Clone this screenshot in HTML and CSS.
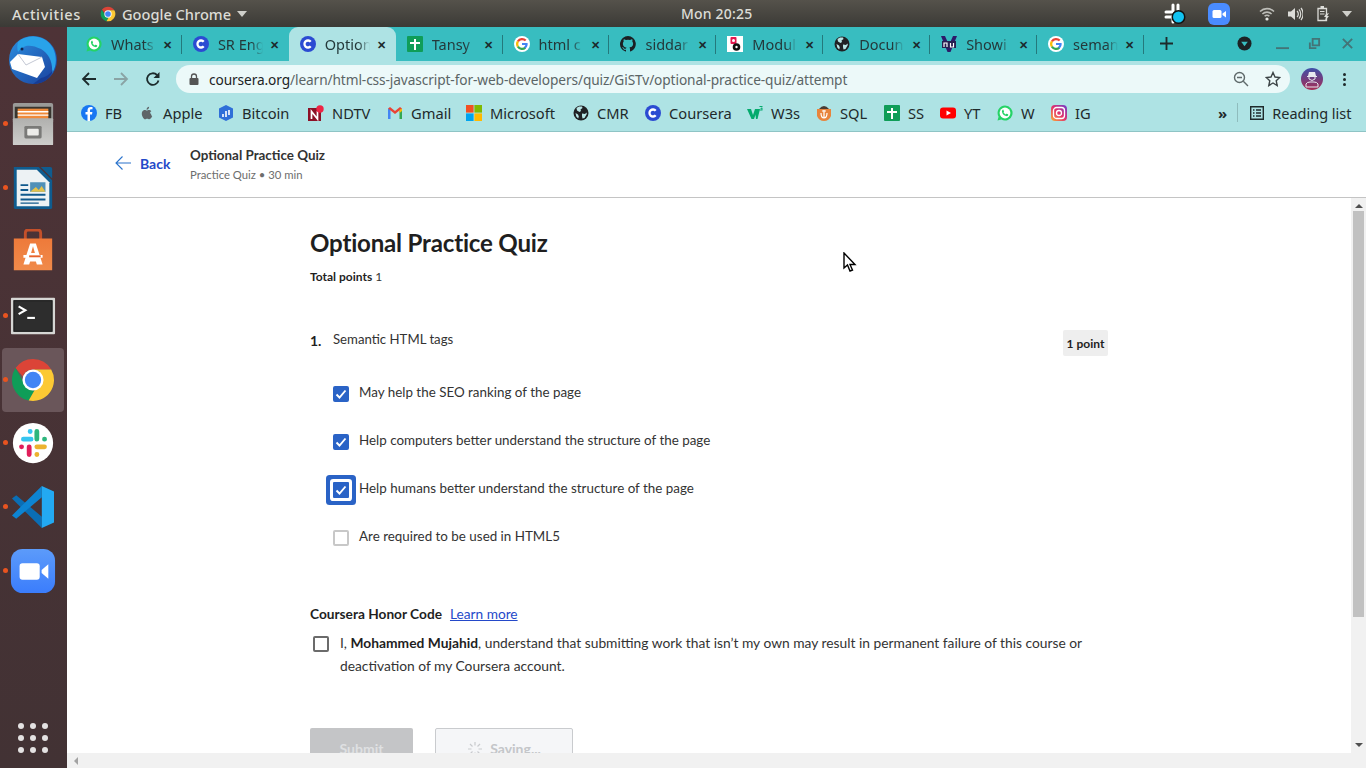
FILE: index.html
```html
<!DOCTYPE html>
<html lang="en">
<head>
<meta charset="utf-8">
<title>Optional Practice Quiz</title>
<link rel="stylesheet" href="styles.css">
</head>
<body>
<svg class="defs" width="0" height="0" aria-hidden="true">
  <symbol id="i-chrome" viewBox="0 0 48 48">
    <path fill="#db4437" d="M24 2a22 22 0 0 1 19 11H24a11 11 0 0 0-10.500 7.500L5.800 11.600A22 22 0 0 1 24 2z"/>
    <path fill="#0f9d58" d="M5.800 11.600 15 28a11 11 0 0 0 11 6.800L19.500 45.500A22 22 0 0 1 5.800 11.600z"/>
    <path fill="#fcc934" d="M43 13a22 22 0 0 1-23.500 32.500L29.500 28A11 11 0 0 0 31 15.500L24 13z"/>
    <circle cx="24" cy="24" r="11" fill="#fff"/><circle cx="24" cy="24" r="8.500" fill="#4285f4"/>
  </symbol>
  <symbol id="i-wa" viewBox="0 0 16 16">
    <path fill="#25d366" d="M8 .5a7.500 7.500 0 0 0-6.400 11.300L.5 15.500l3.800-1A7.500 7.500 0 1 0 8 .5z"/>
    <circle cx="8" cy="8" r="5.400" fill="#fff"/>
    <path fill="#25d366" d="M5.800 4.700c-.7.500-1 1.300-.8 2.200.5 2 2.100 3.700 4.100 4.200.9.200 1.700-.1 2.100-.8.200-.4.100-.8-.2-1l-1.200-.6c-.3-.1-.5 0-.7.200l-.4.500c-1-.4-1.700-1.100-2.200-2.100l.4-.5c.2-.2.200-.4.100-.6l-.6-1.300c-.2-.3-.4-.4-.6-.2z"/>
  </symbol>
  <symbol id="i-c" viewBox="0 0 16 16">
    <circle cx="8" cy="8" r="8" fill="#2b4bd2"/>
    <path fill="none" stroke="#fff" stroke-width="2.300" d="M10.700 5.800a3.500 3.500 0 1 0 0 4.400"/>
  </symbol>
  <symbol id="i-sheet" viewBox="0 0 16 16">
    <rect width="16" height="16" rx="1" fill="#0f9d58"/>
    <path fill="#fff" d="M7 3h2v3h4v2H9v6H7V8H3V6h4z"/>
  </symbol>
  <symbol id="i-g" viewBox="0 0 16 16">
    <circle cx="8" cy="8" r="8" fill="#fff"/>
    <path fill="none" stroke="#ea4335" stroke-width="2.200" d="M11.700 4.600A5 5 0 0 0 3.900 5.400"/>
    <path fill="none" stroke="#fbbc05" stroke-width="2.200" d="M3.900 5.400a5 5 0 0 0 0 5.200"/>
    <path fill="none" stroke="#34a853" stroke-width="2.200" d="M3.900 10.600a5 5 0 0 0 7.500 1.100"/>
    <path fill="#4285f4" d="M8 7h5.600c.3 2-.3 4-2 5.500L10 11c.8-.5 1.200-1.200 1.400-2H8z"/>
  </symbol>
  <symbol id="i-gh" viewBox="0 0 16 16">
    <path fill="#1b1f23" d="M8 0a8 8 0 0 0-2.500 15.600c.4.100.5-.2.500-.4v-1.400c-2.200.5-2.700-1-2.700-1-.4-.9-.9-1.200-.9-1.200-.7-.5.100-.5.100-.5.800.1 1.200.8 1.200.8.700 1.200 1.900.9 2.300.7.100-.5.300-.9.500-1.100-1.800-.2-3.600-.9-3.600-4 0-.9.300-1.600.8-2.100-.1-.2-.4-1 .1-2.100 0 0 .7-.2 2.200.8a7.600 7.600 0 0 1 4 0c1.500-1 2.200-.8 2.200-.8.500 1.100.2 1.900.1 2.100.5.600.8 1.300.8 2.100 0 3.100-1.900 3.700-3.700 3.900.3.300.6.800.6 1.500v2.200c0 .2.100.5.600.4A8 8 0 0 0 8 0z"/>
  </symbol>
  <symbol id="i-modul" viewBox="0 0 16 16">
    <rect width="16" height="16" fill="#fff"/>
    <rect x="3.500" y="1" width="6" height="7" rx="1" fill="#e3174f"/>
    <circle cx="6.500" cy="4.500" r="1.500" fill="#fff"/>
    <circle cx="9.500" cy="11" r="3.800" fill="#111"/>
    <circle cx="9.500" cy="11" r="1.200" fill="#fff"/>
  </symbol>
  <symbol id="i-globe" viewBox="0 0 16 16">
    <circle cx="8" cy="8" r="7.500" fill="#202124"/>
    <path fill="#b9e6e6" d="M6 1.500 3.500 3 4 5.500l2.500 1.500L8 6 7.500 4.500 9.500 3 9 1.600zM9 8.500l3 .5 1.500-1.500.3 1.500L11.500 13 9.500 13.500 9 11zM2.500 8l2.500 1.500.8 2-.6 2L3.300 11.500z"/>
  </symbol>
  <symbol id="i-show" viewBox="0 0 16 16">
    <path fill="#2d1b69" d="M0 0h4l4 9 4-9h4L9.500 16h-3z"/>
    <rect x="1" y="5" width="14" height="7" fill="#26204f"/>
    <path fill="none" stroke="#fff" stroke-width="1.200" d="M3 11V7h3v4M9.500 7v4h3V7"/>
  </symbol>
</svg>

<div class="screen">
  <header class="topbar">
    <div class="top-left">
      <span class="activities">Activities</span>
      <span class="appname">
        <svg class="ic16" aria-hidden="true"><use href="#i-chrome"/></svg>
        Google Chrome
        <i class="caret"></i>
      </span>
    </div>
    <span class="clock">Mon 20:25</span>
    <div class="tray">
      <svg class="tray-slack" viewBox="0 0 24 24" aria-hidden="true">
        <g fill="none" stroke="#fff" stroke-width="3" stroke-linecap="round">
          <path d="M10 3v6M3 10h6M15 3v6M3 15h6M10 15v5"/>
        </g>
        <circle cx="15.500" cy="15" r="7" fill="#111"/><circle cx="15.500" cy="15" r="5.500" fill="#12c2f0"/>
      </svg>
      <svg class="tray-zoom" viewBox="0 0 22 22" aria-hidden="true">
        <rect width="22" height="22" rx="6" fill="#4a8cff"/>
        <rect x="4.500" y="7" width="9" height="8" rx="1.500" fill="#fff"/>
        <path fill="#fff" d="M14.500 10.500 18 8v6.500l-3.500-2.500z"/>
      </svg>
      <svg class="tray-wifi" viewBox="0 0 16 16" aria-hidden="true">
        <path fill="none" stroke="#bdbdb8" stroke-width="1.600" d="M1 5.500a10 10 0 0 1 14 0M3.400 8a6.600 6.600 0 0 1 9.200 0M5.600 10.300a3.400 3.400 0 0 1 4.800 0"/>
        <circle cx="8" cy="13" r="1.600" fill="#e6e6e2"/>
      </svg>
      <svg class="tray-vol" viewBox="0 0 16 16" aria-hidden="true">
        <path fill="#dcdcd8" d="M1 5.500h3L8 2v12L4 10.500H1z"/>
        <path fill="none" stroke="#dcdcd8" stroke-width="1.200" d="M10 5a4 4 0 0 1 0 6M12 3.400a7 7 0 0 1 0 9.200M14 2a9.500 9.500 0 0 1 0 12"/>
      </svg>
      <svg class="tray-bat" viewBox="0 0 12 16" aria-hidden="true">
        <path fill="none" stroke="#dcdcd8" stroke-width="1.300" d="M1 2.500h8.500v12H1z"/>
        <path fill="#dcdcd8" d="M3.500 0h3.500v2H3.500zM3 5h4.500v1H3zM3 7.500h4.500v1H3zM9 8l3-1-2 3h2l-4 5 1-4H7z"/>
      </svg>
      <i class="caret tray-caret"></i>
    </div>
  </header>

  <div class="desktop">
    <nav class="dock">
      <div class="dock-item">
        <svg class="dock-ic big" viewBox="0 0 48 48" aria-hidden="true">
          <defs><linearGradient id="tb" x1="0" x2="1" y1="0" y2="1"><stop offset="0" stop-color="#2b8fe0"/><stop offset="1" stop-color="#1a3f9c"/></linearGradient></defs>
          <circle cx="24" cy="24" r="24" fill="url(#tb)"/>
          <path fill="#29a3ea" d="M9 6C18-2 36-2 44 12c4 8 4 18-1 25 1-11-3-19-11-24-6-3-11-4-15-3-3 1-6 3-8 6-1-3-1-7 0-10z"/>
          <path fill="#173c94" d="M24 48c10 0 17-5 20-14-3 4-7 7-12 8z"/>
          <circle cx="13" cy="13" r="1.500" fill="#12224e"/>
          <path fill="#fff" d="M9 18l24 3 3 10-8 11L3 33 1 26z"/>
          <path fill="none" stroke="#c4c8d4" stroke-width="1" d="M9 18l8 11 16-8"/>
        </svg>
      </div>
      <div class="dock-item running">
        <svg class="dock-ic" viewBox="0 0 48 48" aria-hidden="true">
          <defs><linearGradient id="fg" x1="0" x2="0" y1="0" y2="1"><stop offset="0" stop-color="#b0b0ae"/><stop offset="1" stop-color="#cdcdcb"/></linearGradient></defs>
          <path fill="#9a9a98" d="M3 4q0-2 2-2h38q2 0 2 2v18H3z"/>
          <rect x="5" y="6" width="38" height="14" fill="#38352f"/>
          <rect x="8" y="8" width="32" height="12" fill="#ef8a3a"/>
          <path fill="#fff" d="M8 10.500h32v1.500H8zM8 14h32v1.500H8z"/>
          <rect x="3" y="18" width="42" height="28" rx="1" fill="url(#fg)"/>
          <rect x="15" y="26" width="18" height="13" rx="1.500" fill="#7a7a78"/>
          <rect x="18" y="29" width="12" height="7" rx="1" fill="#ecece9"/>
        </svg>
      </div>
      <div class="dock-item running">
        <svg class="dock-ic" viewBox="0 0 48 48" aria-hidden="true">
          <path fill="#0f5c8f" d="M4 2h26l14 14v28q0 2-2 2H6q-2 0-2-2z"/>
          <path fill="#0f5c8f" d="M32 2h10q2 0 2 2v10z"/>
          <path fill="#edf2f4" d="M7 5h21l13 13v25H7z"/>
          <path fill="#10598c" d="M11 20h8v2h-8zM11 25h8v2h-8zM11 30h26v2H11zM11 35h26v2H11zM11 39h19v1.500H11z"/>
          <rect x="21" y="18" width="16" height="10" fill="#4f90b8"/>
          <path fill="#e3c14a" d="M21 28l6-5 3 3 3-4 4 6z"/>
        </svg>
      </div>
      <div class="dock-item">
        <svg class="dock-ic" viewBox="0 2 48 48" aria-hidden="true">
          <defs><linearGradient id="sg" x1="0" x2="0" y1="0" y2="1"><stop offset="0" stop-color="#ee7a3a"/><stop offset="1" stop-color="#f08a4a"/></linearGradient></defs>
          <path fill="none" stroke="#c4502a" stroke-width="3" d="M16 13V6q0-3 3-3h10q3 0 3 3v7"/>
          <path fill="url(#sg)" d="M4 12h40v33H4z"/>
          <path fill="#fff" d="M21 17h6l7 22h-6l-1-3h-6l-1 3h-6zM22 27h4l-2-7zM14 29h20v3H14z"/>
          <path fill="#e8622a" d="M20 29.500h12v2H20z"/>
        </svg>
      </div>
      <div class="dock-item running">
        <svg class="dock-ic" viewBox="0 -1 48 48" aria-hidden="true">
          <rect x="1" y="4" width="46" height="38" fill="#d6d6d4" rx="1"/>
          <rect x="4" y="7" width="40" height="32" fill="#2d2d2d" stroke="#111" stroke-width="1"/>
          <path fill="none" stroke="#fff" stroke-width="2.200" d="M9 13l7 4-7 4"/>
          <path stroke="#fff" stroke-width="2.200" d="M18 25h8"/>
        </svg>
      </div>
      <div class="dock-item running active">
        <svg class="dock-ic" aria-hidden="true"><use href="#i-chrome"/></svg>
      </div>
      <div class="dock-item running after-active">
        <svg class="dock-ic" viewBox="0 0 48 48" aria-hidden="true">
          <circle cx="24" cy="24" r="21" fill="#fff"/>
          <g fill="none" stroke-width="5" stroke-linecap="round">
            <path stroke="#36c5f0" d="M14 20h8M21 12h.1"/>
            <path stroke="#2eb67d" d="M28 12v8M36 20h.1"/>
            <path stroke="#ecb22e" d="M28 28h8M28 36h.1"/>
            <path stroke="#e01e5a" d="M20 28v8M12 28h.1"/>
          </g>
        </svg>
      </div>
      <div class="dock-item running">
        <svg class="dock-ic vs" viewBox="0 0 100 100" aria-hidden="true">
          <path fill="#0a6eb5" d="M71 100V73L10 22 0 30z"/>
          <path fill="#0d84d2" d="M71 0v27L10 78 0 70z"/>
          <path fill="#23a9f2" d="M71 0l29 13v74l-29 13z"/>
        </svg>
      </div>
      <div class="dock-item running">
        <svg class="dock-ic" viewBox="0 0 48 48" aria-hidden="true">
          <defs><linearGradient id="zg" x1="0" x2="0" y1="0" y2="1"><stop offset="0" stop-color="#5c9bfa"/><stop offset="1" stop-color="#3b7dfc"/></linearGradient></defs>
          <rect x="1" y="1" width="46" height="46" rx="12" fill="url(#zg)"/>
          <rect x="10" y="16" width="21" height="17" rx="3" fill="#fff"/>
          <path fill="#fff" d="M33 23l7-6v15l-7-6z"/>
        </svg>
      </div>
      <div class="apps-grid">
        <i></i><i></i><i></i><i></i><i></i><i></i><i></i><i></i><i></i>
      </div>
    </nav>

    <main class="window">
      <div class="tabstrip">
        <div class="tab"><svg class="ic16"><use href="#i-wa"/></svg><span class="tab-title">Whats</span><span class="tab-x">✕</span></div>
        <div class="tab"><svg class="ic16"><use href="#i-c"/></svg><span class="tab-title">SR Eng</span><span class="tab-x">✕</span></div>
        <div class="tab active"><svg class="ic16"><use href="#i-c"/></svg><span class="tab-title">Option</span><span class="tab-x">✕</span></div>
        <div class="tab"><svg class="ic16"><use href="#i-sheet"/></svg><span class="tab-title">Tansy</span><span class="tab-x">✕</span></div>
        <div class="tab"><svg class="ic16"><use href="#i-g"/></svg><span class="tab-title">html c</span><span class="tab-x">✕</span></div>
        <div class="tab"><svg class="ic16"><use href="#i-gh"/></svg><span class="tab-title">siddar</span><span class="tab-x">✕</span></div>
        <div class="tab"><svg class="ic16"><use href="#i-modul"/></svg><span class="tab-title">Modul</span><span class="tab-x">✕</span></div>
        <div class="tab"><svg class="ic16"><use href="#i-globe"/></svg><span class="tab-title">Docun</span><span class="tab-x">✕</span></div>
        <div class="tab"><svg class="ic16"><use href="#i-show"/></svg><span class="tab-title">Showi</span><span class="tab-x">✕</span></div>
        <div class="tab"><svg class="ic16"><use href="#i-g"/></svg><span class="tab-title">seman</span><span class="tab-x">✕</span></div>
        <svg class="newtab" viewBox="0 0 14 14" aria-hidden="true"><path stroke="#1c2b2c" stroke-width="2" d="M7 0v14M0 7h14"/></svg>
        <svg class="tabsearch" viewBox="0 0 16 16" aria-hidden="true"><circle cx="8" cy="8" r="7.500" fill="#1c2224"/><path fill="#38bdc0" d="M4.500 6h7L8 11z"/></svg>
        <svg class="winbtn win-min" viewBox="0 0 14 14" aria-hidden="true"><path stroke="#437477" stroke-width="2" d="M0 12h14"/></svg>
        <svg class="winbtn win-max" viewBox="0 0 14 14" aria-hidden="true"><path fill="none" stroke="#437477" stroke-width="2" d="M5 2h7v7H5zM2 6v6h7"/></svg>
        <svg class="winbtn win-close" viewBox="0 0 14 14" aria-hidden="true"><path stroke="#437477" stroke-width="2" d="M2 2l10 10M12 2 2 12"/></svg>
      </div>

      <div class="toolbar">
        <svg class="nav-ic" viewBox="0 0 16 16" aria-hidden="true"><path fill="none" stroke="#1c2b2c" stroke-width="1.800" d="M15 8H2M8 2 2 8l6 6"/></svg>
        <svg class="nav-ic" viewBox="0 0 16 16" aria-hidden="true"><path fill="none" stroke="#8aa3a4" stroke-width="1.800" d="M1 8h13M8 2l6 6-6 6"/></svg>
        <svg class="nav-ic" viewBox="0 0 16 16" aria-hidden="true"><path fill="none" stroke="#1c2b2c" stroke-width="1.800" d="M13.500 9.500A5.800 5.800 0 1 1 12 4"/><path fill="#1c2b2c" d="M14.500 1v6h-6z"/></svg>
        <div class="omnibox">
          <svg class="lock" viewBox="0 0 10 12" aria-hidden="true"><path fill="none" stroke="#555" stroke-width="1.300" d="M2.500 5V3.500a2.500 2.500 0 0 1 5 0V5"/><rect y="5" x=".5" width="9" height="7" rx="1" fill="#555"/></svg>
          <span class="url"><b class="host">coursera.org</b>/learn/html-css-javascript-for-web-developers/quiz/GiSTv/optional-practice-quiz/attempt</span>
          <svg class="omni-ic" viewBox="0 0 16 16" aria-hidden="true"><circle cx="6.500" cy="6.500" r="5" fill="none" stroke="#5f6a6b" stroke-width="1.400"/><path stroke="#5f6a6b" stroke-width="1.400" d="M4 6.500h5M10.300 10.300 15 15"/></svg>
          <svg class="omni-ic star" viewBox="0 0 16 16" aria-hidden="true"><path fill="none" stroke="#3c4446" stroke-width="1.400" d="M8 1.500l2 4.500 4.800.5-3.600 3.200 1 4.800L8 12l-4.200 2.500 1-4.800L1.200 6.500 6 6z"/></svg>
        </div>
        <svg class="avatar" viewBox="0 0 22 22" aria-hidden="true">
          <defs><linearGradient id="ag" x1="0" x2="0" y1="0" y2="1"><stop offset="0" stop-color="#3f4fa8"/><stop offset="1" stop-color="#a72d55"/></linearGradient></defs>
          <circle cx="11" cy="11" r="11" fill="url(#ag)"/>
          <path fill="#e8e8f0" d="M8 4h6l1 4H7zM6 8h10v1H6z"/>
          <path fill="none" stroke="#e8e8f0" stroke-width="1" d="M8 9v2q3 3 6 0V9M5 19v-3q1-2 4-2h4q3 0 4 2v3z"/>
        </svg>
        <span class="kebab"><i></i><i></i><i></i></span>
      </div>

      <div class="bookmarks">
        <span class="bm"><svg class="ic16" viewBox="0 0 16 16"><circle cx="8" cy="8" r="8" fill="#1877f2"/><path fill="#fff" d="M9 16V9.500h2l.4-2.500H9V5.500c0-.7.300-1.200 1.300-1.200h1.200V2.100C11 2 10.300 2 9.800 2 7.800 2 6.500 3.200 6.500 5.300V7H4.500v2.500h2V16z"/></svg>FB</span>
        <span class="bm"><svg class="ic16" viewBox="0 0 16 16"><path fill="#5f6568" d="M11 8.500c0-1.500 1.200-2.200 1.300-2.300-.7-1-1.800-1.200-2.200-1.200-.9-.1-1.800.6-2.300.6S6.600 5 5.800 5c-1 0-2 .6-2.500 1.500-1.100 1.900-.3 4.700.8 6.200.5.800 1.200 1.600 2 1.600.8 0 1.100-.5 2.100-.5s1.300.5 2.100.5c.9 0 1.400-.8 2-1.500.6-.9.900-1.700.9-1.800-.1 0-1.200-.6-1.200-2.500zM9.500 3.800c.4-.5.700-1.300.6-2-.7 0-1.500.4-1.900 1-.4.400-.7 1.200-.6 1.900.7 0 1.500-.4 1.900-.9z"/></svg>Apple</span>
        <span class="bm"><svg class="ic16" viewBox="0 0 16 16"><path fill="#2f6fd8" d="M8 0l7 3.500v9L8 16l-7-3.500v-9z"/><path stroke="#fff" stroke-width="1.600" d="M5 9v3M8 6v6M11 5v5"/></svg>Bitcoin</span>
        <span class="bm"><svg class="ic16" viewBox="0 0 16 16"><rect y="3" width="13" height="13" fill="#8c1126"/><path stroke="#fff" stroke-width="1.700" fill="none" d="M3.500 14V6.500l6 7.500V6"/><circle cx="12" cy="4" r="3.700" fill="#ee2444"/></svg>NDTV</span>
        <span class="bm"><svg class="ic16" viewBox="0 0 16 16"><path fill="#4285f4" d="M1 14V3.500L3.500 4v10z"/><path fill="#34a853" d="M12.500 14V5l2.500-1.500V14z"/><path fill="#ea4335" d="M1 3.500 3 2l5 4 5-4 2 1.500-7 5.500z"/><path fill="#fbbc04" d="M12.500 5 15 3.500V6l-2.500 2z"/></svg>Gmail</span>
        <span class="bm"><svg class="ic16" viewBox="0 0 16 16"><path fill="#f25022" d="M0 0h7.600v7.600H0z"/><path fill="#7fba00" d="M8.400 0H16v7.600H8.400z"/><path fill="#00a4ef" d="M0 8.400h7.600V16H0z"/><path fill="#ffb900" d="M8.400 8.400H16V16H8.400z"/></svg>Microsoft</span>
        <span class="bm"><svg class="ic16"><use href="#i-globe"/></svg>CMR</span>
        <span class="bm"><svg class="ic16"><use href="#i-c"/></svg>Coursera</span>
        <span class="bm"><svg class="ic16" viewBox="0 0 16 16"><path fill="#04aa6d" d="M0 4h4l2 6 2-6h2.500l-3.500 10H4.500zM8.500 10l1.500-6h3l-2.500 10H9z"/><path fill="#04aa6d" d="M12.500 1h3v1l-1 1h1v2.500h-3v-1h2v-.8h-1v-.8h1V2h-2z"/></svg>W3s</span>
        <span class="bm"><svg class="ic16" viewBox="0 0 16 16"><path fill="#e8843c" d="M1 4h14v7q-2 5-7 5T1 11z"/><path fill="#4a3c34" d="M3 4q5-6 10 0z"/><path stroke="#fff" stroke-width="1.200" fill="none" d="M8 5v8M5 8q0 5 3 5t3-5M6 6h4"/></svg>SQL</span>
        <span class="bm"><svg class="ic16"><use href="#i-sheet"/></svg>SS</span>
        <span class="bm"><svg class="ic16" viewBox="0 0 16 16"><rect y="2.500" width="16" height="11" rx="3" fill="#f00"/><path fill="#fff" d="M6.500 5.500 11 8l-4.500 2.500z"/></svg>YT</span>
        <span class="bm"><svg class="ic16"><use href="#i-wa"/></svg>W</span>
        <span class="bm"><svg class="ic16" viewBox="0 0 16 16"><defs><linearGradient id="ig" x1="0" x2="1" y1="1" y2="0"><stop offset="0" stop-color="#fdb032"/><stop offset=".5" stop-color="#e1306c"/><stop offset="1" stop-color="#6a3fd0"/></linearGradient></defs><rect width="16" height="16" rx="4" fill="url(#ig)"/><rect x="2.500" y="2.500" width="11" height="11" rx="3" fill="none" stroke="#fff" stroke-width="1.300"/><circle cx="8" cy="8" r="2.500" fill="none" stroke="#fff" stroke-width="1.300"/></svg>IG</span>
        <span class="bm-more">»</span>
        <span class="bm-sep"></span>
        <span class="bm reading"><svg class="ic16" viewBox="0 0 16 16"><path fill="none" stroke="#1f2a2b" stroke-width="1.400" d="M1.700 1.700h12.600v12.600H1.700zM4 5h1.500M7 5h5M4 8h1.500M7 8h5M4 11h1.500M7 11h5"/></svg>Reading list</span>
      </div>

      <div class="page">
        <div class="page-head">
          <a class="back"><svg class="back-ic" viewBox="0 0 16 14" aria-hidden="true"><path fill="none" stroke="#2a73cc" stroke-width="1.100" d="M16 7H1M7.500 .5 1 7l6.500 6.500"/></svg>Back</a>
          <div class="head-text">
            <div class="head-title">Optional Practice Quiz</div>
            <div class="head-sub">Practice Quiz • 30 min</div>
          </div>
        </div>
        <div class="page-body">
          <div class="scroll-area">
            <div class="column">
              <h1 class="quiz-title">Optional Practice Quiz</h1>
              <p class="total"><b>Total points</b> 1</p>
              <div class="question">
                <span class="q-num">1.</span>
                <span class="q-text">Semantic HTML tags</span>
                <span class="q-points">1 point</span>
              </div>
              <ul class="options">
                <li class="option"><span class="check on"><svg viewBox="0 0 16 16"><path fill="none" stroke="#fff" stroke-width="1.900" d="M3.500 8.500l3 3 6-7"/></svg></span>May help the SEO ranking of the page</li>
                <li class="option"><span class="check on"><svg viewBox="0 0 16 16"><path fill="none" stroke="#fff" stroke-width="1.900" d="M3.500 8.500l3 3 6-7"/></svg></span>Help computers better understand the structure of the page</li>
                <li class="option"><span class="check on focus"><svg viewBox="0 0 16 16"><path fill="none" stroke="#fff" stroke-width="1.900" d="M3.500 8.500l3 3 6-7"/></svg></span>Help humans better understand the structure of the page</li>
                <li class="option"><span class="check"></span>Are required to be used in HTML5</li>
              </ul>
              <div class="honor-head"><b>Coursera Honor Code</b><a class="learn">Learn more</a></div>
              <div class="honor">
                <span class="check dark"></span>
                <p>I, <b>Mohammed Mujahid</b>, understand that submitting work that isn’t my own may result in permanent failure of this course or deactivation of my Coursera account.</p>
              </div>
              <div class="actions">
                <span class="btn submit">Submit</span>
                <span class="btn saving"><svg class="spin" viewBox="0 0 16 16"><path stroke="#c9cbce" stroke-width="1.200" d="M8 1v3.500M8 11.500V15M1 8h3.500M11.500 8H15M3 3l2.500 2.500M10.500 10.500 13 13M13 3l-2.500 2.500M5.500 10.500 3 13"/></svg>Saving...</span>
              </div>
            </div>
          </div>
          <div class="vscroll"><i class="up"></i><span class="vthumb"></span><i class="down"></i></div>
        </div>
        <div class="hscroll"><i class="left"></i></div>
      </div>
    </main>
  </div>
  <svg class="cursor" viewBox="0 0 14 21" aria-hidden="true"><path fill="#fff" stroke="#000" stroke-width="1.400" d="M1 1v15l3.500-3 2.500 6 2.500-1-2.500-5.500H12z"/></svg>
</div>
</body>
</html>
```
FILE: styles.css
```css
* { box-sizing: border-box; }
html, body { margin: 0; padding: 0; height: 100%; overflow: hidden; }
body { font-family: "Noto Sans", sans-serif; background: #fff; }
.defs { position: absolute; }
.screen { width: 1366px; height: 768px; display: flex; flex-direction: column; overflow: hidden; position: relative; }
.ic16 { width: 16px; height: 16px; flex: none; display: block; }
.cursor { position: absolute; left: 843px; top: 252px; width: 14px; height: 21px; }

/* top bar */
.topbar { height: 27px; flex: none; display: flex; align-items: center; background: linear-gradient(#55524b, #3b3a36); color: #dcdcd6; font-size: 14.600px; font-weight: 500; }
.top-left { width: 681px; display: flex; align-items: center; padding-left: 12px; flex: none; }
.activities { width: 88px; letter-spacing: .6px; }
.appname { display: flex; align-items: center; gap: 6px; }
.caret { display: inline-block; width: 0; height: 0; border-left: 5.500px solid transparent; border-right: 5.500px solid transparent; border-top: 6px solid #cfcfca; margin-left: 0; }
.clock { letter-spacing: .2px; white-space: nowrap; font-size: 14px; }
.tray { margin-left: auto; display: flex; align-items: center; padding-right: 14px; }
.tray-slack { width: 24px; height: 24px; margin-right: 21px; }
.tray-zoom { width: 22px; height: 22px; margin-right: 29px; }
.tray-wifi { width: 16px; height: 16px; margin-right: 12px; }
.tray-vol { width: 16px; height: 16px; margin-right: 14px; }
.tray-bat { width: 12px; height: 16px; margin-right: 13px; }

/* dock */
.desktop { flex: 1; display: flex; min-height: 0; }
.dock { width: 67px; flex: none; display: flex; flex-direction: column; background: linear-gradient(#4e3337, #423234); padding-top: 1px; }
.dock-item { height: 64px; flex: none; margin: 0 3px 0 2px; display: flex; align-items: center; justify-content: center; position: relative; border-radius: 4px; }
.dock-item.active { background: #6a565a; }
.dock-item.after-active { margin-top: -1px; }
.dock-item.running::before { content: ""; position: absolute; left: 1px; top: 29px; width: 5px; height: 5px; border-radius: 50%; background: #e95420; }
.dock-ic { width: 46px; height: 46px; display: block; flex: none; }
.dock-ic.big { width: 48px; height: 48px; }
.dock-ic.vs { width: 42px; height: 42px; }
.apps-grid { margin: auto 0 15px 18px; display: grid; grid-template-columns: repeat(3, 6px); gap: 6px; width: 30px; }
.apps-grid i { width: 6px; height: 6px; border-radius: 50%; background: #e4e2e2; display: block; }

/* window */
.window { flex: 1; min-width: 0; display: flex; flex-direction: column; background: #fff; }
.tabstrip { height: 34px; flex: none; background: #38bdc0; display: flex; align-items: flex-end; padding-left: 8px; color: #1c2b2c; }
.tab { width: 106.900px; height: 34px; flex: none; display: flex; align-items: center; padding: 0 7px 0 11px; font-size: 14.500px; position: relative; }
.tab::after { content: ""; position: absolute; right: 0; top: 8px; height: 19px; width: 1px; background: #24797c; }
.tab.active { background: #aee3e4; border-radius: 9px 9px 0 0; }
.tab.active::after, .tab:nth-child(2)::after { background: transparent; }
.tab-title { flex: 1; min-width: 0; margin-left: 9px; white-space: nowrap; overflow: hidden; -webkit-mask-image: linear-gradient(90deg, #000 68%, transparent 92%); mask-image: linear-gradient(90deg, #000 68%, transparent 92%); color: #24393a; }
.tab-x { font-size: 11px; width: 14px; text-align: center; margin-left: 1px; color: #1c2b2c; font-weight: 700; }
.newtab { width: 13px; height: 13px; margin: 0 0 11px 16px; flex: none; align-self: flex-end; }
.tabsearch { width: 15px; height: 15px; margin: 0 0 10px 64px; flex: none; }
.winbtn { width: 13px; height: 13px; flex: none; margin-bottom: 11px; }
.win-min { margin-left: 24px; }
.win-max { margin-left: 19px; }
.win-close { margin-left: 20px; }

.toolbar { height: 36px; flex: none; background: #aee3e4; display: flex; align-items: center; padding-left: 14px; }
.nav-ic { width: 16px; height: 16px; flex: none; margin-right: 16px; }
.omnibox { width: 1114px; height: 28px; margin-left: -1px; background: #ecf9f9; border-radius: 14px; display: flex; align-items: center; padding: 0 9px 0 13px; font-size: 13.700px; color: #5b6566; flex: none; }
.lock { width: 10px; height: 12px; flex: none; margin-right: 10px; }
.url { flex: 1; white-space: nowrap; letter-spacing: -.1px; }
.host { font-weight: 400; color: #1d2425; }
.omni-ic { width: 16px; height: 16px; flex: none; }
.star { margin: 0 0 0 16px; }
.avatar { width: 22px; height: 22px; margin-left: 11px; flex: none; }
.kebab { display: flex; flex-direction: column; gap: 2px; margin-left: 20px; }
.kebab i { width: 3px; height: 3px; border-radius: 50%; background: #1f2a2b; display: block; }

.bookmarks { height: 35px; flex: none; background: #aee3e4; border-bottom: 1px solid #8fc4c5; display: flex; align-items: center; padding: 0 0 3px 14px; font-size: 14.700px; color: #1f2a2b; }
.bm { display: flex; align-items: center; gap: 8px; white-space: nowrap; flex: none; }
.bm:nth-child(1) { width: 58px; }
.bm:nth-child(2) { width: 79px; }
.bm:nth-child(3) { width: 90px; }
.bm:nth-child(4) { width: 79px; }
.bm:nth-child(5) { width: 79px; }
.bm:nth-child(6) { width: 107px; }
.bm:nth-child(7) { width: 72px; }
.bm:nth-child(8) { width: 102px; }
.bm:nth-child(9) { width: 69px; }
.bm:nth-child(10) { width: 68px; }
.bm:nth-child(11) { width: 56px; }
.bm:nth-child(12) { width: 57px; }
.bm:nth-child(13) { width: 54px; }
.bm:nth-child(14) { width: 47px; }
.bm-more { margin-left: 120px; font-size: 15px; font-weight: 700; }
.bm-sep { width: 1px; height: 19px; background: #8fbcbd; margin: 0 11px 0 10px; }
.reading { gap: 7px; font-size: 14.500px; }

/* page */
.page { flex: 1; min-height: 0; display: flex; flex-direction: column; font-family: "Lato", sans-serif; color: #1f1f1f; font-size: 14px; }
.page-head { height: 66px; flex: none; border-bottom: 1px solid #c4c4c4; display: flex; align-items: center; padding-left: 48px; }
.back { display: flex; align-items: center; gap: 9px; width: 75px; color: #2449c9; font-weight: 700; font-size: 14px; margin-top: -3px; }
.back-ic { width: 16px; height: 14px; flex: none; }
.head-title { font-weight: 700; font-size: 13.400px; line-height: 18px; color: #333; margin-top: 1px; }
.head-sub { font-size: 11.300px; line-height: 20px; margin-top: 1px; color: #6d6d6d; }
.page-body { flex: 1; min-height: 0; display: flex; }
.scroll-area { flex: 1; min-width: 0; overflow: hidden; }
.column { width: 798px; margin: 0 auto; padding-top: 28px; }
.quiz-title { margin: 0; font-size: 24.100px; line-height: 33px; font-weight: 700; color: #1f1f1f; letter-spacing: -.2px; }
.total { margin: 9px 0 0; font-size: 12px; line-height: 17px; color: #333; }
.total b { color: #1f1f1f; }
.question { display: flex; margin-top: 45px; height: 26px; }
.q-num { width: 23px; font-weight: 700; padding-top: 1px; line-height: 20px; }
.q-text { flex: 1; line-height: 18px; color: #333; font-size: 13.200px; }
.q-points { width: 45px; height: 26px; background: #eee; border-radius: 2px; font-size: 12px; font-weight: 700; display: flex; align-items: center; justify-content: center; }
.options { list-style: none; margin: 26px 0 0 23px; padding: 0; }
.option { height: 48px; display: flex; align-items: flex-start; line-height: 20px; color: #333; font-size: 13.400px; }
.check { width: 16px; height: 16px; flex: none; border: 2px solid #c8c8c8; border-radius: 2px; margin: 4px 10px 0 0; display: block; position: relative; background: #fff; }
.check.on { background: #2a63c6; border-color: #2a63c6; }
.check.on svg { position: absolute; left: -2px; top: -2px; width: 16px; height: 16px; display: block; }
.check.focus { box-shadow: 0 0 0 3px #fff, 0 0 0 7px #2a63c6; border-radius: 1px; }
.honor-head { margin-top: 30px; line-height: 20px; display: flex; gap: 8px; font-size: 13.700px; }
.honor-head b { color: #1f1f1f; }
.learn { color: #2449c9; text-decoration: underline; }
.honor { display: flex; margin-top: 7px; font-size: 13.800px; }
.check.dark { border-color: #6b6b6b; margin: 5px 11px 0 3px; }
.honor p { margin: 0; line-height: 23px; color: #333; }
.honor p b { color: #1f1f1f; }
.actions { display: flex; gap: 22px; margin-top: 51px; }
.btn { height: 41px; display: flex; align-items: center; justify-content: center; border-radius: 2px; font-weight: 700; font-size: 14px; }
.submit { width: 103px; background: #c4c5c7; color: #dfe0e2; }
.saving { width: 138px; background: #f5f6f8; border: 1px solid #c9cbce; color: #c4c6c9; gap: 7px; }
.spin { width: 16px; height: 16px; flex: none; }
.vscroll { width: 15px; flex: none; background: #f1f1f1; display: flex; flex-direction: column; align-items: center; }
.vthumb { display: block; width: 11px; height: 406px; background: #c1c1c1; margin: 3px 0 auto; }
.up { width: 0; height: 0; border: 4px solid transparent; border-bottom: 4px solid #505050; margin-top: 2px; }
.down { width: 0; height: 0; border: 4px solid transparent; border-top: 4px solid #505050; margin-bottom: 2px; }
.hscroll { height: 15px; flex: none; background: #f1f1f1; display: flex; align-items: center; padding-left: 3px; }
.left { width: 0; height: 0; border: 4px solid transparent; border-right: 4px solid #a3a3a3; }
```
